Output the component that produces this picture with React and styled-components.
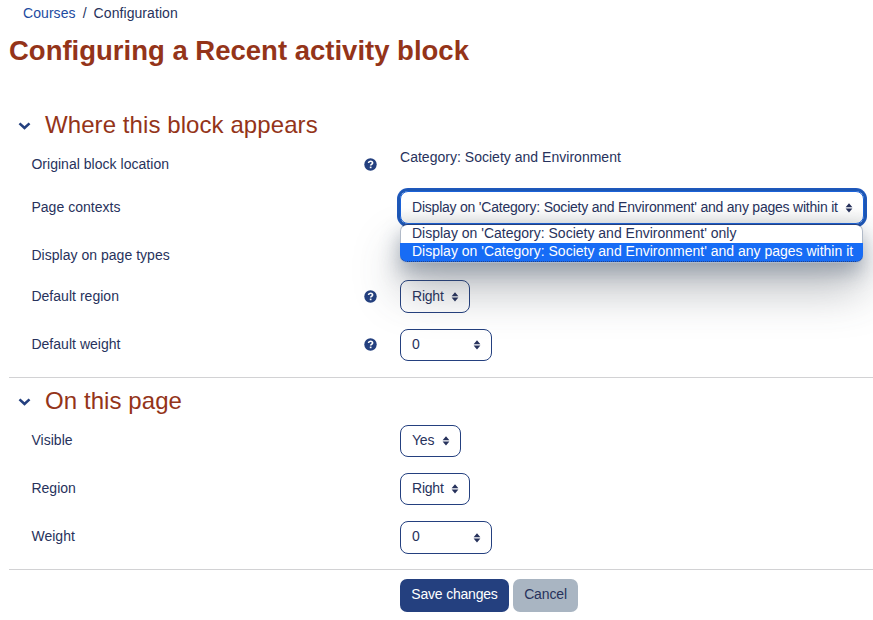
import React from "react";
import styled, { createGlobalStyle } from "styled-components";

const navy = "#24407f";
const ink = "#27325c";
const rust = "#943419";

const GlobalStyle = createGlobalStyle`
  * { box-sizing: border-box; }
  body {
    margin: 0;
    background: #fff;
    color: ${ink};
    font: 14px/20px "Liberation Sans", Arial, sans-serif;
    overflow: hidden;
  }
`;

const Page = styled.main`
  width: 873px;
  height: 620px;
  padding-left: 9px;
  overflow: hidden;
  display: flex;
  flex-direction: column;
`;

const Breadcrumb = styled.nav`
  display: flex;
  gap: 7px;
  height: 20px;
  margin: 3px 0 0 14px;
  letter-spacing: 0.07px;
`;

const Crumb = styled.a`
  color: #1d4ba0;
`;

const Title = styled.h1`
  margin: 10px 0 0;
  height: 35px;
  font-size: 27.5px;
  line-height: 35px;
  font-weight: 700;
  color: ${rust};
  white-space: nowrap;
`;

const Section = styled.section`
  padding-top: ${(p) => p.$top}px;
  height: ${(p) => p.$height}px;
  border-bottom: 1px solid #d2d2d4;
`;

const SectionHeader = styled.header`
  display: flex;
  align-items: center;
  height: 30px;
  padding-left: 9px;
  gap: 14px;
`;

const SectionTitle = styled.h2`
  margin: 0;
  font-size: 24px;
  line-height: 30px;
  font-weight: 400;
  letter-spacing: 0.08px;
  color: ${rust};
`;

const FieldList = styled.div`
  padding-top: 8px;
`;

const Row = styled.div`
  display: grid;
  grid-template-columns: 333px 36px 1fr;
  height: ${(p) => p.$height || 48}px;
  padding-left: 22px;
`;

const Label = styled.label`
  padding: 6px 0 0 0.4px;
  letter-spacing: 0.03px;
`;

const HelpCell = styled.span`
  padding-top: 10px;
  height: 24px;
`;

const Value = styled.div`
  margin-top: -1px;
  letter-spacing: 0.02px;
`;

const SelectWrap = styled.div`
  position: relative;
  display: flex;
  align-items: flex-start;
  padding-top: ${(p) => p.$offset || 0}px;
`;

const SelectBox = styled.button`
  display: flex;
  align-items: center;
  justify-content: space-between;
  width: ${(p) => p.$width}px;
  height: ${(p) => p.$height || 33}px;
  padding: 0 10px 0 11px;
  border: 1px solid ${(p) => (p.$focused ? "#1b62d8" : navy)};
  border-radius: 8px;
  background: ${(p) => (p.$focused ? "linear-gradient(#fff 50%, #eeefee)" : "#fff")};
  color: ${ink};
  font: inherit;
  letter-spacing: -0.22px;
  white-space: nowrap;
  box-shadow: ${(p) => (p.$focused ? "0 0 0 2px #1d57b4, 0 0 0 3px #1f58bd" : "none")};
`;

const SelectText = styled.span`
  padding-bottom: ${(p) => p.$lift}px;
`;

const Popup = styled.ul`
  position: absolute;
  z-index: 2;
  top: 33px;
  left: 0;
  width: 463px;
  height: 39px;
  margin: 0;
  padding: 0;
  list-style: none;
  border: 1px solid #b1bac8;
  border-top: 1px solid ${navy};
  border-radius: 7px;
  background: #fff;
  box-shadow: 0 26px 46px rgba(62, 72, 82, 0.38), 0 9px 20px rgba(50, 72, 100, 0.38);
`;

const Option = styled.li`
  height: ${(p) => (p.$selected ? 19 : 18)}px;
  margin: ${(p) => (p.$selected ? "0 -1px" : "0")};
  padding-left: ${(p) => (p.$selected ? 12 : 11)}px;
  line-height: 17px;
  white-space: nowrap;
  color: ${(p) => (p.$selected ? "#fff" : ink)};
  background: ${(p) => (p.$selected ? "#176cf5" : "transparent")};
  border-bottom: ${(p) => (p.$selected ? `1px dotted ${navy}` : "0")};
  border-radius: ${(p) => (p.$selected ? "0 0 7px 7px" : "0")};
`;

const Actions = styled.footer`
  display: flex;
  gap: 4px;
  padding: 9px 0 0 391px;
`;

const ActionButton = styled.button`
  width: ${(p) => p.$width}px;
  height: 33px;
  padding: 0 0 3px;
  border: 0;
  border-radius: 7px;
  font: inherit;
  letter-spacing: ${(p) => (p.$primary ? -0.2 : -0.15)}px;
  color: ${(p) => (p.$primary ? "#fff" : ink)};
  background: ${(p) => (p.$primary ? navy : "#a9b5c2")};
`;

const Icon = styled.svg`
  display: block;
  flex: none;
`;

const Chevron = () => (
  <Icon width="13" height="12" viewBox="0 0 13 12">
    <path d="M1.5 4.4 6.5 9l5-4.6" fill="none" stroke={navy} strokeWidth="2.6" />
  </Icon>
);

const Arrows = () => (
  <Icon width="8" height="10" viewBox="0 0 8 10">
    <path d="M4 .2 7.4 4.2H.6ZM.6 5.5h6.8L4 9.6Z" fill={ink} />
  </Icon>
);

const Help = () => (
  <HelpCell>
    <Icon width="13" height="13" viewBox="0 0 13 13">
      <circle cx="6.5" cy="6.5" r="6.2" fill={navy} />
      <path d="M4.5 5c.1-1.2.9-1.8 2-1.8 1.2 0 2.1.6 2.1 1.7 0 1.4-1.9 1.2-1.9 2.6" fill="none" stroke="#fff" strokeWidth="1.6" />
      <path d="M5.8 8.6h1.7v1.6H5.8z" fill="#fff" />
    </Icon>
  </HelpCell>
);

const Select = ({ value, width, height, offset, lift = 2, focused, children }) => (
  <SelectWrap $offset={offset}>
    <SelectBox type="button" $width={width} $height={height} $focused={focused}>
      <SelectText $lift={lift}>{value}</SelectText>
      <Arrows />
    </SelectBox>
    {children}
  </SelectWrap>
);

const Field = ({ label, help, height, children }) => (
  <Row $height={height}>
    <Label>{label}</Label>
    {help ? <Help /> : <span />}
    {children}
  </Row>
);

const SectionHeading = ({ children }) => (
  <SectionHeader>
    <Chevron />
    <SectionTitle>{children}</SectionTitle>
  </SectionHeader>
);

const within = "Display on 'Category: Society and Environment' and any pages within it";

export default function App() {
  return (
    <Page>
      <GlobalStyle />
      <Breadcrumb>
        <Crumb>Courses</Crumb>
        <span>/</span>
        <span>Configuration</span>
      </Breadcrumb>
      <Title>Configuring a Recent activity block</Title>
      <Section $top={42} $height={310}>
        <SectionHeading>Where this block appears</SectionHeading>
        <FieldList>
          <Field label="Original block location" help height={43}>
            <Value>Category: Society and Environment</Value>
          </Field>
          <Field label="Page contexts">
            <Select value={within} width={464} focused>
              <Popup>
                <Option>Display on 'Category: Society and Environment' only</Option>
                <Option $selected>{within}</Option>
              </Popup>
            </Select>
          </Field>
          <Field label="Display on page types" height={41} />
          <Field label="Default region" help>
            <Select value="Right" width={70} />
          </Field>
          <Field label="Default weight" help>
            <Select value="0" width={92} height={32} offset={1} />
          </Field>
        </FieldList>
      </Section>
      <Section $top={8} $height={192}>
        <SectionHeading>On this page</SectionHeading>
        <FieldList>
          <Field label="Visible">
            <Select value="Yes" width={61} height={32} offset={1} lift={3} />
          </Field>
          <Field label="Region">
            <Select value="Right" width={70} height={32} offset={1} lift={3} />
          </Field>
          <Field label="Weight">
            <Select value="0" width={92} offset={1} lift={3} />
          </Field>
        </FieldList>
      </Section>
      <Actions>
        <ActionButton $width={109} $primary>Save changes</ActionButton>
        <ActionButton $width={65}>Cancel</ActionButton>
      </Actions>
    </Page>
  );
}
